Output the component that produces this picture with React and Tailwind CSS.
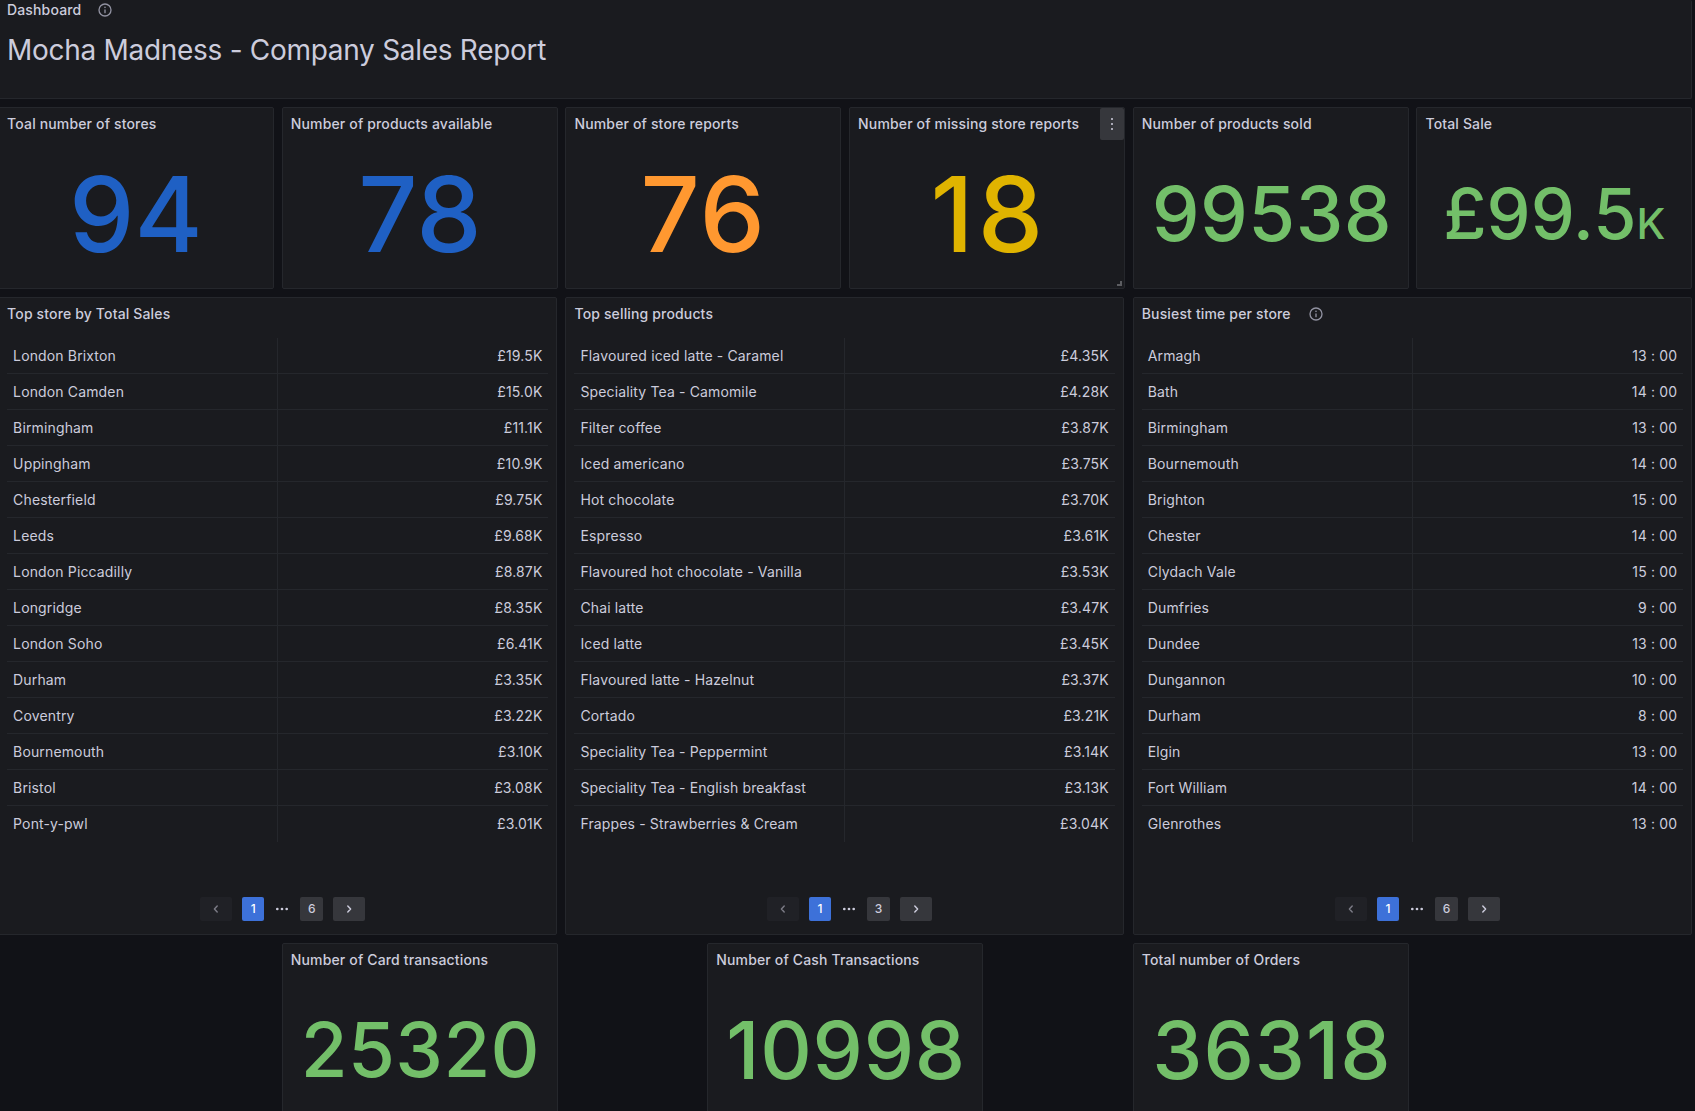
import React from "react";

const stores = [
  ["London Brixton", "£19.5K"],
  ["London Camden", "£15.0K"],
  ["Birmingham", "£11.1K"],
  ["Uppingham", "£10.9K"],
  ["Chesterfield", "£9.75K"],
  ["Leeds", "£9.68K"],
  ["London Piccadilly", "£8.87K"],
  ["Longridge", "£8.35K"],
  ["London Soho", "£6.41K"],
  ["Durham", "£3.35K"],
  ["Coventry", "£3.22K"],
  ["Bournemouth", "£3.10K"],
  ["Bristol", "£3.08K"],
  ["Pont-y-pwl", "£3.01K"],
];

const products = [
  ["Flavoured iced latte - Caramel", "£4.35K"],
  ["Speciality Tea - Camomile", "£4.28K"],
  ["Filter coffee", "£3.87K"],
  ["Iced americano", "£3.75K"],
  ["Hot chocolate", "£3.70K"],
  ["Espresso", "£3.61K"],
  ["Flavoured hot chocolate - Vanilla", "£3.53K"],
  ["Chai latte", "£3.47K"],
  ["Iced latte", "£3.45K"],
  ["Flavoured latte - Hazelnut", "£3.37K"],
  ["Cortado", "£3.21K"],
  ["Speciality Tea - Peppermint", "£3.14K"],
  ["Speciality Tea - English breakfast", "£3.13K"],
  ["Frappes - Strawberries & Cream", "£3.04K"],
];

const times = [
  ["Armagh", "13 : 00"],
  ["Bath", "14 : 00"],
  ["Birmingham", "13 : 00"],
  ["Bournemouth", "14 : 00"],
  ["Brighton", "15 : 00"],
  ["Chester", "14 : 00"],
  ["Clydach Vale", "15 : 00"],
  ["Dumfries", "9 : 00"],
  ["Dundee", "13 : 00"],
  ["Dungannon", "10 : 00"],
  ["Durham", "8 : 00"],
  ["Elgin", "13 : 00"],
  ["Fort William", "14 : 00"],
  ["Glenrothes", "13 : 00"],
];

function InfoIcon() {
  return (
    <svg className="size-4 text-[#9192a1]" viewBox="0 0 24 24" fill="currentColor">
      <path d="M12 2a10 10 0 1 0 10 10A10 10 0 0 0 12 2Zm0 18a8 8 0 1 1 8-8 8 8 0 0 1-8 8Zm0-9a1 1 0 0 0-1 1v4a1 1 0 0 0 2 0v-4a1 1 0 0 0-1-1Zm0-4.25A1.25 1.25 0 1 0 13.25 8 1.25 1.25 0 0 0 12 6.75Z" />
    </svg>
  );
}

function Chevron({ right }) {
  return (
    <svg
      className={right ? "size-4 rotate-180" : "size-4"}
      viewBox="0 0 24 24"
      fill="none"
      stroke="currentColor"
      strokeWidth="2.2"
      strokeLinecap="round"
      strokeLinejoin="round"
    >
      <path d="M13.8 7.6 9.6 12l4.2 4.4" />
    </svg>
  );
}

function Panel({ title, info, className = "", children }) {
  return (
    <section
      className={`relative flex flex-col rounded-[2px] border border-[#25272c] bg-[#1a1b1f] ${className}`}
    >
      <header className="flex h-8 shrink-0 items-center gap-[17px] pl-2">
        <h2 className="text-sm font-medium tracking-[0.15px] whitespace-nowrap">{title}</h2>
        {info && <InfoIcon />}
      </header>
      {children}
    </section>
  );
}

function Stat({ title, size, color, className = "", value, unit, children }) {
  return (
    <Panel title={title} className={`h-[182px] ${className}`}>
      <div className="flex flex-1 items-center justify-center">
        <div className={`leading-[1.2] font-medium whitespace-nowrap ${size} ${color}`}>
          {value}
          {unit && <span className="text-[42px]">{unit}</span>}
        </div>
      </div>
      {children}
    </Panel>
  );
}

function Table({ title, info, rows, last, className = "" }) {
  return (
    <Panel title={title} info={info} className={`col-span-4 h-[638px] ${className}`}>
      <div className="mx-2 mt-2">
        {rows.map(([name, value], i) => (
          <div
            key={name}
            className={`flex h-9 text-sm leading-[35px] tracking-[0.14px] ${
              i < rows.length - 1 ? "border-b border-[#25272c]" : ""
            }`}
          >
            <div className="flex-1 border-r border-[#25272c] pl-1.5">{name}</div>
            <div className="flex-1 pr-1.5 text-right">{value}</div>
          </div>
        ))}
      </div>
      <nav className="mt-auto mb-[13px] flex h-6 items-center justify-center pl-2.5 text-xs font-medium">
        <button className="flex h-6 w-8 items-center justify-center rounded-[2px] bg-[#202126] text-[#7b7b86]">
          <Chevron />
        </button>
        <button className="ml-2.5 h-6 w-[22px] rounded-[2px] bg-[#3d71d9] text-white">1</button>
        <svg className="mx-[11px] h-3.5 w-3.5" viewBox="0 0 14 14" fill="currentColor">
          <circle cx="2.3" cy="7" r="1.35" />
          <circle cx="7" cy="7" r="1.35" />
          <circle cx="11.7" cy="7" r="1.35" />
        </svg>
        <button className="h-6 w-[23px] rounded-[2px] bg-[#36373c]">{last}</button>
        <button className="ml-2.5 flex h-6 w-8 items-center justify-center rounded-[2px] bg-[#36373c]">
          <Chevron right />
        </button>
      </nav>
    </Panel>
  );
}

export default function App() {
  return (
    <main className="h-[1111px] w-[1695px] overflow-hidden bg-[#111217] font-['Inter',sans-serif] text-[#ccccdc]">
      <div className="-ml-[1.9px] grid w-[1694px] grid-cols-12 gap-2">
        <section className="col-span-12 h-[99px] rounded-[2px] border border-t-0 border-[#25272c] bg-[#1a1b1f] pl-[7.9px]">
          <div className="flex h-5 items-center gap-4 text-sm font-medium tracking-[0.15px]">
            Dashboard
            <InfoIcon />
          </div>
          <h1 className="mt-3 text-[28px] leading-9 tracking-[-0.29px]">
            Mocha Madness - Company Sales Report
          </h1>
        </section>

        <Stat className="col-span-2" title="Toal number of stores" value="94" size="text-[104px]" color="text-[#1f60c4]" />
        <Stat className="col-span-2 -mr-[0.6px]" title="Number of products available" value="78" size="text-[104px]" color="text-[#1f60c4]" />
        <Stat className="col-span-2" title="Number of store reports" value="76" size="text-[104px] tracking-[1px]" color="text-[#ff9830]" />
        <Stat className="col-span-2" title="Number of missing store reports" value="18" size="pl-1 text-[104px] tracking-[4px]" color="text-[#e0b400]">
          <button className="absolute top-0 right-0 flex h-8 w-6 items-center justify-center rounded-[2px] bg-[#36373c]">
            <svg className="size-4 text-[#a9a9b6]" viewBox="0 0 16 16" fill="currentColor">
              <rect x="7" y="2" width="2" height="2" />
              <rect x="7" y="7" width="2" height="2" />
              <rect x="7" y="12" width="2" height="2" />
            </svg>
          </button>
          <span className="absolute right-[2px] bottom-[2px] size-[5px] border-r-2 border-b-2 border-[#5c5d61]" />
        </Stat>
        <Stat className="col-span-2 -mr-[0.6px]" title="Number of products sold" value="99538" size="pl-[2px] text-[76px] tracking-[0.4px]" color="text-[#73bf69]" />
        <Stat className="col-span-2" title="Total Sale" value="£99.5" unit="K" size="text-[70px]" color="text-[#73bf69]" />

        <Table title="Top store by Total Sales" rows={stores} last="6" />
        <Table className="mr-px" title="Top selling products" rows={products} last="3" />
        <Table title="Busiest time per store" info rows={times} last="6" />

        <Stat className="col-span-2 col-start-3 -mr-[0.6px]" title="Number of Card transactions" value="25320" size="pl-px text-[76px] tracking-[0.4px]" color="text-[#73bf69]" />
        <Stat className="col-span-2 col-start-6" title="Number of Cash Transactions" value="10998" size="pl-[2px] text-[80px] tracking-[0.7px]" color="text-[#73bf69]" />
        <Stat className="col-span-2 col-start-9 -mr-[0.6px]" title="Total number of Orders" value="36318" size="pl-[2px] text-[80px] tracking-[1px]" color="text-[#73bf69]" />
      </div>
    </main>
  );
}
